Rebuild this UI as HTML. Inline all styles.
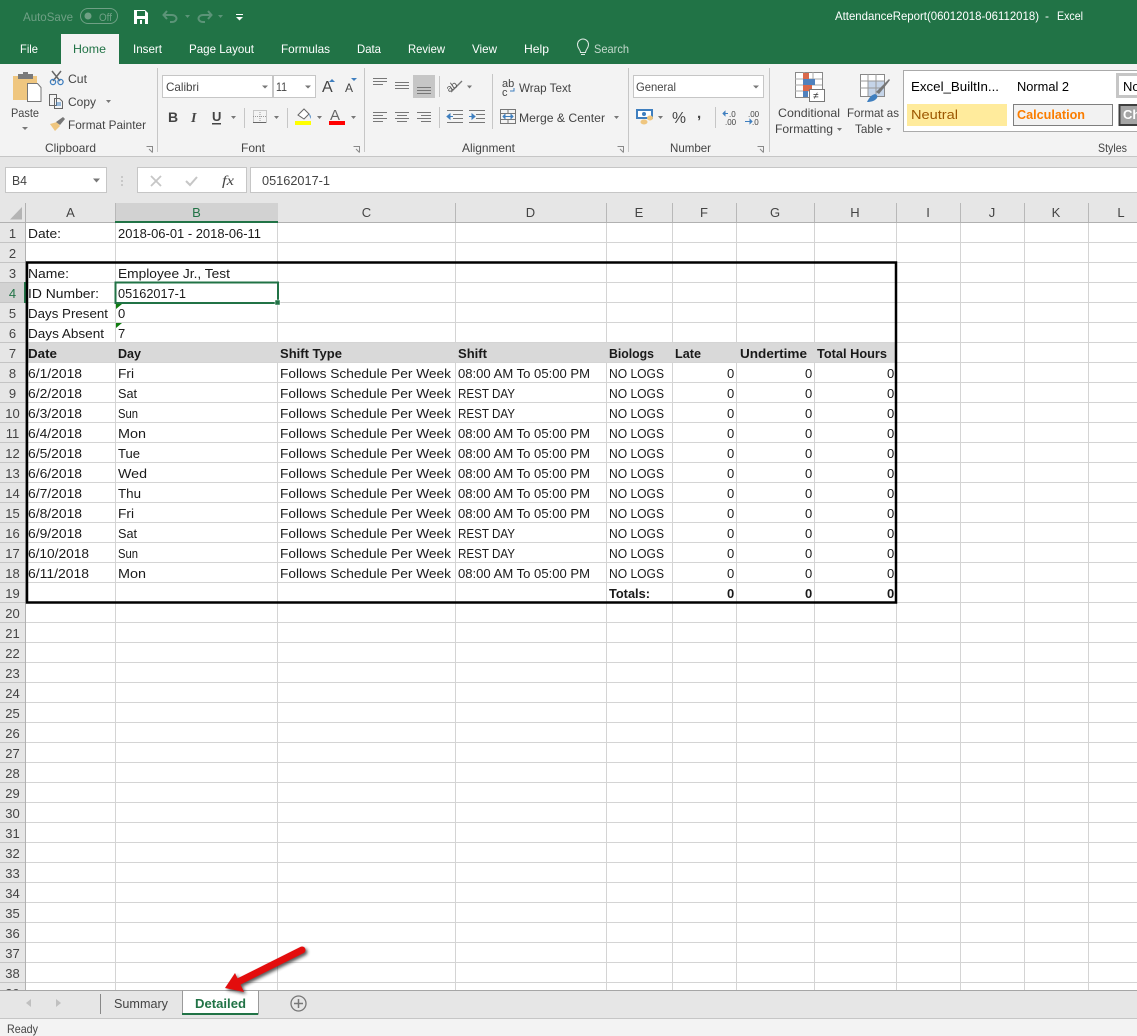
<!DOCTYPE html>
<html><head><meta charset="utf-8"><title>AttendanceReport - Excel</title>
<style>
html,body{margin:0;padding:0;background:#fff;width:1137px;height:1036px;overflow:hidden}
svg{display:block;font-family:"Liberation Sans",sans-serif}
.c text{font-size:13px;fill:#1a1a1a}
.b text{font-weight:bold}
.r text{font-size:12px;fill:#444}
.n text{font-size:13px;fill:#444;text-anchor:middle}
.t text{font-size:12px;fill:#fff}
.car{fill:#777}
.ln{stroke:#777;stroke-width:1;fill:none}
.sep{stroke:#c6c6c6;stroke-width:1}
</style></head><body>
<svg xmlns="http://www.w3.org/2000/svg" width="1137" height="1036" viewBox="0 0 1137 1036">
<defs>
<pattern id="rows" x="0" y="222" width="1137" height="20" patternUnits="userSpaceOnUse"><rect x="0" y="0" width="1137" height="1" fill="#d4d4d4"/></pattern>
<pattern id="hrows" x="0" y="222" width="26" height="20" patternUnits="userSpaceOnUse"><rect x="0" y="0" width="26" height="1" fill="#c4c4c4"/></pattern>
<filter id="sh" x="-20%" y="-20%" width="150%" height="150%"><feGaussianBlur stdDeviation="1.6"/></filter>
</defs>

<!-- title bar -->
<rect width="1137" height="64" fill="#217346"/>
<g class="t">
<text x="23" y="21" textLength="50" lengthAdjust="spacingAndGlyphs" style="fill:#6fa085">AutoSave</text>
<rect x="80.500" y="8.500" width="37" height="15" rx="7.500" fill="none" stroke="#6fa085"/>
<circle cx="88" cy="16" r="3.500" fill="#6fa085"/>
<text x="99" y="21" textLength="13" lengthAdjust="spacingAndGlyphs" style="fill:#6fa085;font-size:11px">Off</text>
<path d="M134 10h11l3 3v11h-14z" fill="#fff"/><rect x="137" y="11" width="8" height="5" fill="#217346"/><rect x="137" y="19" width="8" height="5" fill="#217346"/><rect x="140" y="20" width="2" height="4" fill="#fff"/>
<path d="M167 11l-3.500 4 3.500 4M164 15h8c3 0 4.500 2 4.500 3.500s-1.500 3.500-4.500 3.500h-2" fill="none" stroke="#5c9478" stroke-width="2"/>
<path d="M185 15h5l-2.500 3z" fill="#5c9478"/>
<path d="M208 11l3.500 4-3.500 4M211 15h-8c-3 0-4.500 2-4.500 3.500s1.500 3.500 4.500 3.500h2" fill="none" stroke="#5c9478" stroke-width="2"/>
<path d="M218 15h5l-2.500 3z" fill="#5c9478"/>
<rect x="236" y="14" width="7" height="1" fill="#fff"/><path d="M236 17h7l-3.500 3.500z" fill="#fff"/>
<text x="835" y="20" textLength="204" lengthAdjust="spacingAndGlyphs">AttendanceReport(06012018-06112018)</text>
<text x="1045" y="20">-</text>
<text x="1057" y="20" textLength="26" lengthAdjust="spacingAndGlyphs">Excel</text>
<text x="20" y="53" textLength="18" lengthAdjust="spacingAndGlyphs">File</text>
<rect x="61" y="34" width="58" height="30" fill="#f3f3f3"/>
<text x="73" y="53" textLength="33" lengthAdjust="spacingAndGlyphs" style="fill:#217346">Home</text>
<text x="133" y="53" textLength="29" lengthAdjust="spacingAndGlyphs">Insert</text>
<text x="189" y="53" textLength="65" lengthAdjust="spacingAndGlyphs">Page Layout</text>
<text x="281" y="53" textLength="49" lengthAdjust="spacingAndGlyphs">Formulas</text>
<text x="357" y="53" textLength="24" lengthAdjust="spacingAndGlyphs">Data</text>
<text x="408" y="53" textLength="37" lengthAdjust="spacingAndGlyphs">Review</text>
<text x="472" y="53" textLength="25" lengthAdjust="spacingAndGlyphs">View</text>
<text x="524" y="53" textLength="25" lengthAdjust="spacingAndGlyphs">Help</text>
<path d="M580.500 52.500c0-3-3-4-3-8a5.500 5.500 0 0 1 11 0c0 4-3 5-3 8zM581 54.500h4" fill="none" stroke="#dfeae4" stroke-width="1"/>
<text x="594" y="53" textLength="35" lengthAdjust="spacingAndGlyphs" style="fill:#c3d9cc">Search</text>
</g>

<!-- ribbon -->
<rect y="64" width="1137" height="92" fill="#f3f3f3"/>
<rect y="156" width="1137" height="1" fill="#c6c6c6"/>
<rect y="157" width="1137" height="46" fill="#e6e6e6"/>

<g class="sep">
<path d="M157.500 68v84M364.500 68v84M628.500 68v84M769.500 68v84"/>
<path d="M244.500 108v20M287.500 108v20M439.500 76v21M439.500 107v21M492.500 74v55M715.500 107v21"/>
</g>

<!-- clipboard -->
<path d="M13 76h24v24H13z" fill="#efc67f"/>
<rect x="18" y="74" width="15" height="5" fill="#7a7a7a"/><rect x="23" y="72" width="5" height="4" fill="#7a7a7a"/>
<path d="M27.500 83.500h10l3.500 4v14h-13.500z" fill="#fff" stroke="#777"/>
<path class="car" d="M22 127h6l-3 3z"/>
<path d="M52 71l8 10M61 71l-8 10" stroke="#666" stroke-width="1.500" fill="none"/>
<circle cx="53" cy="82" r="2.600" fill="none" stroke="#3f7fbf" stroke-width="1.300"/><circle cx="60.500" cy="82" r="2.600" fill="none" stroke="#3f7fbf" stroke-width="1.300"/>
<path d="M49.500 94.500h7v11h-7zM54.500 98.500h5l3 3v7h-8z" fill="#f3f3f3" stroke="#666"/>
<path d="M56 103h5M56 105h5" stroke="#3f7fbf"/>
<path d="M50 124l7-2 3 4-5 5z" fill="#efc67f"/><path d="M56 122l7-5 2 2-5 6z" fill="#777"/>
<g class="r">
<text x="11" y="117" textLength="28" lengthAdjust="spacingAndGlyphs">Paste</text>
<text x="68" y="83" textLength="19" lengthAdjust="spacingAndGlyphs">Cut</text>
<text x="68" y="106" textLength="28" lengthAdjust="spacingAndGlyphs">Copy</text>
<text x="68" y="129" textLength="78" lengthAdjust="spacingAndGlyphs">Format Painter</text>
<text x="45" y="152" textLength="51" lengthAdjust="spacingAndGlyphs">Clipboard</text>
<text x="241" y="152" textLength="24" lengthAdjust="spacingAndGlyphs">Font</text>
<text x="462" y="152" textLength="53" lengthAdjust="spacingAndGlyphs">Alignment</text>
<text x="670" y="152" textLength="41" lengthAdjust="spacingAndGlyphs">Number</text>
<text x="1098" y="152" textLength="29" lengthAdjust="spacingAndGlyphs">Styles</text>
</g>
<path class="car" d="M106 100h5l-2.500 3z"/>
<g fill="none" stroke="#888"><path d="M146.500 146.500h6v6M149 149l3.500 3.500"/><path d="M353.500 146.500h6v6M356 149l3.500 3.500"/><path d="M617.500 146.500h6v6M620 149l3.500 3.500"/><path d="M757.500 146.500h6v6M760 149l3.500 3.500"/></g>

<!-- font -->
<rect x="162.500" y="75.500" width="110" height="22" fill="#fff" stroke="#c6c6c6"/>
<rect x="273.500" y="75.500" width="42" height="22" fill="#fff" stroke="#c6c6c6"/>
<path class="car" d="M262 85.500h6l-3 3zM305 85.500h6l-3 3z"/>
<g class="r">
<text x="166" y="91" textLength="33" lengthAdjust="spacingAndGlyphs">Calibri</text>
<text x="276" y="91" textLength="11" lengthAdjust="spacingAndGlyphs">11</text>
<text x="322" y="92" style="font-size:16px">A</text><text x="345" y="92" style="font-size:12px">A</text>
<text x="168" y="122" style="font-weight:bold;font-size:14px">B</text>
<text x="191" y="122" style="font-style:italic;font-family:'Liberation Serif',serif;font-weight:bold;font-size:14px">I</text>
<text x="212" y="121" style="font-weight:bold;font-size:13px">U</text>
</g>
<rect x="212" y="123" width="9" height="1.500" fill="#444"/>
<path d="M329 82l3-3 3 3z" fill="#3f7fbf"/><path d="M351 78h6l-3 3z" fill="#3f7fbf"/>
<path class="car" d="M231 116h5l-2.500 3zM274 116h5l-2.500 3zM317 116h5l-2.500 3zM351 116h5l-2.500 3z"/>
<path d="M253.500 110.500h13v12h-13zM260 110v13M253 116.500h13" fill="none" stroke="#999" stroke-dasharray="1 1"/><path d="M253 122.500h13" stroke="#666"/>
<path d="M298 115l6-6 5 5-5 5z" fill="#fff" stroke="#666"/><path d="M309 114c2 1 2 3 1.500 5z" fill="#3f7fbf"/>
<rect x="295" y="121" width="16" height="4" fill="#ff0"/>
<text x="330" y="120" style="font-size:15px;font-weight:normal;fill:#666">A</text>
<rect x="329" y="121" width="16" height="4" fill="#f00"/>

<!-- alignment -->
<rect x="413" y="75" width="22" height="23" fill="#c6c6c6"/>
<g class="ln">
<path d="M373 78.500h14M373 81.500h14M373 84.500h10"/>
<path d="M395 82.500h14M395 85.500h14M395 88.500h14"/>
<path d="M417 87.500h14M417 90.500h14M417 93.500h14"/>
<path d="M373 112.500h14M373 115.500h10M373 118.500h14M373 121.500h10"/>
<path d="M395 112.500h14M397 115.500h10M395 118.500h14M397 121.500h10"/>
<path d="M417 112.500h14M421 115.500h10M417 118.500h14M421 121.500h10"/>
<path d="M447 110.500h16M453 114.500h10M453 118.500h10M447 122.500h16"/>
<path d="M469 110.500h16M476 114.500h9M476 118.500h9M469 122.500h16"/>
<path d="M451 92l11-11" stroke-width="1.300"/>
<path d="M500.500 109.500h15v14h-15zM500.500 113.500h15M500.500 119.500h15M508 109v4M508 120v4"/>
</g>
<path d="M447 116.500h6M447 116.500l3-2.500v5z" stroke="#3f7fbf" fill="#3f7fbf"/>
<path d="M475 116.500h-6M475 116.500l-3-2.500v5z" stroke="#3f7fbf" fill="#3f7fbf"/>
<path d="M503 116.500h10M503 116.500l2-2v4zM513 116.500l-2-2v4z" stroke="#3f7fbf" fill="#3f7fbf"/>
<text x="447" y="90" style="font-size:10px;fill:#555" transform="rotate(-35 452 88)">ab</text>
<path class="car" d="M467 85.500h5l-2.500 3zM614 116h5l-2.500 3z"/>
<g class="r">
<text x="502" y="87" style="font-size:11px">ab</text><text x="502" y="96" style="font-size:11px">c</text>
<text x="519" y="92" textLength="52" lengthAdjust="spacingAndGlyphs">Wrap Text</text>
<text x="519" y="122" textLength="86" lengthAdjust="spacingAndGlyphs">Merge &amp; Center</text>
</g>
<path d="M514 88v3h-4" fill="none" stroke="#3f7fbf"/>

<!-- number -->
<rect x="633.500" y="75.500" width="130" height="22" fill="#fff" stroke="#c6c6c6"/>
<path class="car" d="M753 85.500h6l-3 3z"/>
<rect x="637" y="110" width="15" height="8" fill="#fff" stroke="#3f7fbf" stroke-width="2"/>
<circle cx="644" cy="114" r="2" fill="#3f7fbf"/>
<ellipse cx="644" cy="122" rx="3.500" ry="2.500" fill="#efc67f"/><ellipse cx="650" cy="118" rx="3" ry="2.500" fill="#efc67f"/>
<path class="car" d="M658 116h5l-2.500 3z"/>
<g class="r">
<text x="636" y="91" textLength="40" lengthAdjust="spacingAndGlyphs">General</text>
<text x="672" y="123" style="font-size:16px" textLength="14" lengthAdjust="spacingAndGlyphs">%</text>
<text x="697" y="118" style="font-weight:bold;font-size:15px">,</text>
<text x="729" y="117" style="font-size:8px">.0</text><text x="725" y="125" style="font-size:8px">.00</text>
<text x="748" y="117" style="font-size:8px">.00</text><text x="752" y="125" style="font-size:8px">.0</text>
</g>
<path d="M723 113.500h5M723 113.500l2-2v4z" stroke="#3f7fbf" fill="#3f7fbf"/>
<path d="M745 121.500h7M752 121.500l-2-2v4z" stroke="#3f7fbf" fill="#3f7fbf"/>

<!-- conditional -->
<path d="M795.500 72.500h27v25h-27z" fill="#fff" stroke="#888"/>
<path d="M804 72v25M813 72v13M795 79h27M795 85h27M795 91h14" stroke="#aaa" fill="none"/>
<rect x="803" y="73" width="6" height="6" fill="#d9684a"/><rect x="803" y="79" width="12" height="6" fill="#4f81bd"/><rect x="803" y="85" width="9" height="6" fill="#d9684a"/><rect x="803" y="91" width="5" height="6" fill="#4f81bd"/>
<rect x="809.500" y="89.500" width="15" height="12" fill="#fff" stroke="#777"/>
<text x="813" y="99" style="font-size:10px;fill:#333">≠</text>
<path d="M860.500 74.500h24v22h-24z" fill="#fff" stroke="#888"/>
<rect x="868" y="81" width="16" height="15" fill="#c5d4e8"/>
<path d="M868 74v22M876 74v22M860 81h24M860 88h24" stroke="#999" fill="none"/>
<path d="M876 92l10-10 3-3 1 1-3 4-8 10z" fill="#777"/><path d="M867 102c2-4 4-7 8-8 2 1 3 2 2 4-2 3-6 4-10 4z" fill="#3f7fbf"/>
<g class="r">
<text x="778" y="117" textLength="62" lengthAdjust="spacingAndGlyphs">Conditional</text>
<text x="775" y="133" textLength="58" lengthAdjust="spacingAndGlyphs">Formatting</text>
<text x="847" y="117" textLength="52" lengthAdjust="spacingAndGlyphs">Format as</text>
<text x="855" y="133" textLength="28" lengthAdjust="spacingAndGlyphs">Table</text>
</g>
<path class="car" d="M837 128h5l-2.500 3zM886 128h5l-2.500 3z"/>

<!-- styles gallery -->
<rect x="903.500" y="70.500" width="240" height="61" fill="#fff" stroke="#aaa"/>
<text x="911" y="91" textLength="88" lengthAdjust="spacingAndGlyphs" fill="#000" font-size="13">Excel_BuiltIn...</text>
<text x="1017" y="91" textLength="52" lengthAdjust="spacingAndGlyphs" fill="#000" font-size="13">Normal 2</text>
<rect x="1117.500" y="74.500" width="30" height="22" fill="#fff" stroke="#c6c6c6" stroke-width="3"/>
<text x="1123" y="91" fill="#000" font-size="13">No</text>
<rect x="907" y="104" width="100" height="22" fill="#ffeb9c"/>
<text x="911" y="119" textLength="47" lengthAdjust="spacingAndGlyphs" fill="#9c5700" font-size="13">Neutral</text>
<rect x="1013.500" y="104.500" width="99" height="21" fill="#f2f2f2" stroke="#7f7f7f"/>
<text x="1017" y="119" textLength="68" lengthAdjust="spacingAndGlyphs" fill="#fa7d00" font-size="13" font-weight="bold">Calculation</text>
<rect x="1119.500" y="105" width="30" height="20" fill="#a5a5a5" stroke="#3f3f3f" stroke-width="2"/>
<text x="1123" y="119" fill="#fff" font-size="13" font-weight="bold">Ch</text>

<!-- formula bar -->
<rect x="5.500" y="167.500" width="101" height="25" fill="#fff" stroke="#c6c6c6"/>
<rect x="137.500" y="167.500" width="109" height="25" fill="#fff" stroke="#c6c6c6"/>
<rect x="250.500" y="167.500" width="890" height="25" fill="#fff" stroke="#c6c6c6"/>
<path class="car" d="M93 178.500h7l-3.500 4z"/>
<path d="M122 176v2M122 180v2M122 184v2" stroke="#aaa"/>
<path d="M151 176l10 10M161 176l-10 10" stroke="#c6c6c6" stroke-width="1.800"/>
<path d="M186 181l4 4 7-8" stroke="#c6c6c6" stroke-width="2" fill="none"/>
<g class="r">
<text x="12" y="185" textLength="15" lengthAdjust="spacingAndGlyphs" style="font-size:13px">B4</text>
<text x="222" y="185" style="font-family:'Liberation Serif',serif;font-style:italic;font-size:14px" textLength="12" lengthAdjust="spacingAndGlyphs">fx</text>
<text x="262" y="185" textLength="68" lengthAdjust="spacingAndGlyphs" style="font-size:13px">05162017-1</text>
</g>

<!-- sheet -->
<rect x="0" y="203" width="1137" height="787" fill="#fff"/>
<rect x="0" y="203" width="1137" height="19" fill="#e6e6e6"/>
<rect x="0" y="203" width="25" height="787" fill="#e6e6e6"/>
<rect x="0" y="222" width="25" height="768" fill="url(#hrows)"/>
<rect x="26" y="222" width="1111" height="768" fill="url(#rows)"/>
<path d="M115.500 222V990M277.500 222V990M455.500 222V990M606.500 222V990M672.500 222V990M736.500 222V990M814.500 222V990M896.500 222V990M960.500 222V990M1024.500 222V990M1088.500 222V990" stroke="#d4d4d4"/>
<path d="M115.500 203v19M277.500 203v19M455.500 203v19M606.500 203v19M672.500 203v19M736.500 203v19M814.500 203v19M896.500 203v19M960.500 203v19M1024.500 203v19M1088.500 203v19" stroke="#b8b8b8"/>
<path d="M25.500 203V990M0 222.500H1137" stroke="#b1b1b1"/>
<path d="M10 219.500L22 207v12.500z" fill="#b4b4b4"/>
<rect x="116" y="203" width="162" height="19" fill="#d2d2d2"/>
<rect x="115" y="221" width="163" height="2" fill="#217346"/>
<rect x="0" y="283" width="25" height="19" fill="#d2d2d2"/>
<rect x="24" y="282" width="2" height="21" fill="#217346"/>
<rect x="27" y="343" width="868" height="19" fill="#d9d9d9"/>

<g class="n">
<text x="70.500" y="217">A</text><text x="196.500" y="217" style="fill:#217346">B</text><text x="366.500" y="217">C</text><text x="530.500" y="217">D</text><text x="639" y="217">E</text><text x="704" y="217">F</text><text x="775" y="217">G</text><text x="855" y="217">H</text><text x="928" y="217">I</text><text x="992" y="217">J</text><text x="1056" y="217">K</text><text x="1121" y="217">L</text>
<text x="12.500" y="238">1</text><text x="12.500" y="258">2</text><text x="12.500" y="278">3</text><text x="12.500" y="298" style="fill:#217346">4</text><text x="12.500" y="318">5</text><text x="12.500" y="338">6</text><text x="12.500" y="358">7</text><text x="12.500" y="378">8</text><text x="12.500" y="398">9</text><text x="12.500" y="418">10</text><text x="12.500" y="438">11</text><text x="12.500" y="458">12</text><text x="12.500" y="478">13</text><text x="12.500" y="498">14</text><text x="12.500" y="518">15</text><text x="12.500" y="538">16</text><text x="12.500" y="558">17</text><text x="12.500" y="578">18</text><text x="12.500" y="598">19</text><text x="12.500" y="618">20</text><text x="12.500" y="638">21</text><text x="12.500" y="658">22</text><text x="12.500" y="678">23</text><text x="12.500" y="698">24</text><text x="12.500" y="718">25</text><text x="12.500" y="738">26</text><text x="12.500" y="758">27</text><text x="12.500" y="778">28</text><text x="12.500" y="798">29</text><text x="12.500" y="818">30</text><text x="12.500" y="838">31</text><text x="12.500" y="858">32</text><text x="12.500" y="878">33</text><text x="12.500" y="898">34</text><text x="12.500" y="918">35</text><text x="12.500" y="938">36</text><text x="12.500" y="958">37</text><text x="12.500" y="978">38</text><text x="12.500" y="998">39</text>
</g>

<g class="c">
<text x="28" y="238" textLength="33" lengthAdjust="spacingAndGlyphs">Date:</text>
<text x="118" y="238" textLength="143" lengthAdjust="spacingAndGlyphs">2018-06-01 - 2018-06-11</text>
<text x="28" y="278" textLength="41" lengthAdjust="spacingAndGlyphs">Name:</text>
<text x="118" y="278" textLength="112" lengthAdjust="spacingAndGlyphs">Employee Jr., Test</text>
<text x="28" y="298" textLength="71" lengthAdjust="spacingAndGlyphs">ID Number:</text>
<text x="118" y="298" textLength="68" lengthAdjust="spacingAndGlyphs">05162017-1</text>
<text x="28" y="318" textLength="80" lengthAdjust="spacingAndGlyphs">Days Present</text>
<text x="118" y="318">0</text>
<text x="28" y="338" textLength="76" lengthAdjust="spacingAndGlyphs">Days Absent</text>
<text x="118" y="338">7</text>

<text x="28" y="378" textLength="54" lengthAdjust="spacingAndGlyphs">6/1/2018</text>
<text x="28" y="398" textLength="54" lengthAdjust="spacingAndGlyphs">6/2/2018</text>
<text x="28" y="418" textLength="54" lengthAdjust="spacingAndGlyphs">6/3/2018</text>
<text x="28" y="438" textLength="54" lengthAdjust="spacingAndGlyphs">6/4/2018</text>
<text x="28" y="458" textLength="54" lengthAdjust="spacingAndGlyphs">6/5/2018</text>
<text x="28" y="478" textLength="54" lengthAdjust="spacingAndGlyphs">6/6/2018</text>
<text x="28" y="498" textLength="54" lengthAdjust="spacingAndGlyphs">6/7/2018</text>
<text x="28" y="518" textLength="54" lengthAdjust="spacingAndGlyphs">6/8/2018</text>
<text x="28" y="538" textLength="54" lengthAdjust="spacingAndGlyphs">6/9/2018</text>
<text x="28" y="558" textLength="61" lengthAdjust="spacingAndGlyphs">6/10/2018</text>
<text x="28" y="578" textLength="61" lengthAdjust="spacingAndGlyphs">6/11/2018</text>

<text x="118" y="378" textLength="16" lengthAdjust="spacingAndGlyphs">Fri</text>
<text x="118" y="398" textLength="19" lengthAdjust="spacingAndGlyphs">Sat</text>
<text x="118" y="418" textLength="20" lengthAdjust="spacingAndGlyphs">Sun</text>
<text x="118" y="438" textLength="28" lengthAdjust="spacingAndGlyphs">Mon</text>
<text x="118" y="458" textLength="22" lengthAdjust="spacingAndGlyphs">Tue</text>
<text x="118" y="478" textLength="29" lengthAdjust="spacingAndGlyphs">Wed</text>
<text x="118" y="498" textLength="23" lengthAdjust="spacingAndGlyphs">Thu</text>
<text x="118" y="518" textLength="16" lengthAdjust="spacingAndGlyphs">Fri</text>
<text x="118" y="538" textLength="19" lengthAdjust="spacingAndGlyphs">Sat</text>
<text x="118" y="558" textLength="20" lengthAdjust="spacingAndGlyphs">Sun</text>
<text x="118" y="578" textLength="28" lengthAdjust="spacingAndGlyphs">Mon</text>

<text x="280" y="378" textLength="171" lengthAdjust="spacingAndGlyphs">Follows Schedule Per Week</text>
<text x="280" y="398" textLength="171" lengthAdjust="spacingAndGlyphs">Follows Schedule Per Week</text>
<text x="280" y="418" textLength="171" lengthAdjust="spacingAndGlyphs">Follows Schedule Per Week</text>
<text x="280" y="438" textLength="171" lengthAdjust="spacingAndGlyphs">Follows Schedule Per Week</text>
<text x="280" y="458" textLength="171" lengthAdjust="spacingAndGlyphs">Follows Schedule Per Week</text>
<text x="280" y="478" textLength="171" lengthAdjust="spacingAndGlyphs">Follows Schedule Per Week</text>
<text x="280" y="498" textLength="171" lengthAdjust="spacingAndGlyphs">Follows Schedule Per Week</text>
<text x="280" y="518" textLength="171" lengthAdjust="spacingAndGlyphs">Follows Schedule Per Week</text>
<text x="280" y="538" textLength="171" lengthAdjust="spacingAndGlyphs">Follows Schedule Per Week</text>
<text x="280" y="558" textLength="171" lengthAdjust="spacingAndGlyphs">Follows Schedule Per Week</text>
<text x="280" y="578" textLength="171" lengthAdjust="spacingAndGlyphs">Follows Schedule Per Week</text>

<text x="458" y="378" textLength="132" lengthAdjust="spacingAndGlyphs">08:00 AM To 05:00 PM</text>
<text x="458" y="398" textLength="57" lengthAdjust="spacingAndGlyphs">REST DAY</text>
<text x="458" y="418" textLength="57" lengthAdjust="spacingAndGlyphs">REST DAY</text>
<text x="458" y="438" textLength="132" lengthAdjust="spacingAndGlyphs">08:00 AM To 05:00 PM</text>
<text x="458" y="458" textLength="132" lengthAdjust="spacingAndGlyphs">08:00 AM To 05:00 PM</text>
<text x="458" y="478" textLength="132" lengthAdjust="spacingAndGlyphs">08:00 AM To 05:00 PM</text>
<text x="458" y="498" textLength="132" lengthAdjust="spacingAndGlyphs">08:00 AM To 05:00 PM</text>
<text x="458" y="518" textLength="132" lengthAdjust="spacingAndGlyphs">08:00 AM To 05:00 PM</text>
<text x="458" y="538" textLength="57" lengthAdjust="spacingAndGlyphs">REST DAY</text>
<text x="458" y="558" textLength="57" lengthAdjust="spacingAndGlyphs">REST DAY</text>
<text x="458" y="578" textLength="132" lengthAdjust="spacingAndGlyphs">08:00 AM To 05:00 PM</text>

<text x="609" y="378" textLength="55" lengthAdjust="spacingAndGlyphs">NO LOGS</text>
<text x="609" y="398" textLength="55" lengthAdjust="spacingAndGlyphs">NO LOGS</text>
<text x="609" y="418" textLength="55" lengthAdjust="spacingAndGlyphs">NO LOGS</text>
<text x="609" y="438" textLength="55" lengthAdjust="spacingAndGlyphs">NO LOGS</text>
<text x="609" y="458" textLength="55" lengthAdjust="spacingAndGlyphs">NO LOGS</text>
<text x="609" y="478" textLength="55" lengthAdjust="spacingAndGlyphs">NO LOGS</text>
<text x="609" y="498" textLength="55" lengthAdjust="spacingAndGlyphs">NO LOGS</text>
<text x="609" y="518" textLength="55" lengthAdjust="spacingAndGlyphs">NO LOGS</text>
<text x="609" y="538" textLength="55" lengthAdjust="spacingAndGlyphs">NO LOGS</text>
<text x="609" y="558" textLength="55" lengthAdjust="spacingAndGlyphs">NO LOGS</text>
<text x="609" y="578" textLength="55" lengthAdjust="spacingAndGlyphs">NO LOGS</text>

<text x="727" y="378">0</text><text x="805" y="378">0</text><text x="887" y="378">0</text>
<text x="727" y="398">0</text><text x="805" y="398">0</text><text x="887" y="398">0</text>
<text x="727" y="418">0</text><text x="805" y="418">0</text><text x="887" y="418">0</text>
<text x="727" y="438">0</text><text x="805" y="438">0</text><text x="887" y="438">0</text>
<text x="727" y="458">0</text><text x="805" y="458">0</text><text x="887" y="458">0</text>
<text x="727" y="478">0</text><text x="805" y="478">0</text><text x="887" y="478">0</text>
<text x="727" y="498">0</text><text x="805" y="498">0</text><text x="887" y="498">0</text>
<text x="727" y="518">0</text><text x="805" y="518">0</text><text x="887" y="518">0</text>
<text x="727" y="538">0</text><text x="805" y="538">0</text><text x="887" y="538">0</text>
<text x="727" y="558">0</text><text x="805" y="558">0</text><text x="887" y="558">0</text>
<text x="727" y="578">0</text><text x="805" y="578">0</text><text x="887" y="578">0</text>
</g>
<g class="c b">
<text x="28" y="358" textLength="29" lengthAdjust="spacingAndGlyphs">Date</text>
<text x="118" y="358" textLength="23" lengthAdjust="spacingAndGlyphs">Day</text>
<text x="280" y="358" textLength="62" lengthAdjust="spacingAndGlyphs">Shift Type</text>
<text x="458" y="358" textLength="29" lengthAdjust="spacingAndGlyphs">Shift</text>
<text x="609" y="358" textLength="45" lengthAdjust="spacingAndGlyphs">Biologs</text>
<text x="675" y="358" textLength="26" lengthAdjust="spacingAndGlyphs">Late</text>
<text x="740" y="358" textLength="67" lengthAdjust="spacingAndGlyphs">Undertime</text>
<text x="817" y="358" textLength="70" lengthAdjust="spacingAndGlyphs">Total Hours</text>
<text x="609" y="598" textLength="41" lengthAdjust="spacingAndGlyphs">Totals:</text>
<text x="727" y="598">0</text><text x="805" y="598">0</text><text x="887" y="598">0</text>
</g>

<!-- outline + selection -->
<rect x="27" y="262.500" width="869" height="340" fill="none" stroke="#000" stroke-width="2.500"/>
<path d="M116 304h6l-6 5zM116 323h6l-6 5z" fill="#107c10"/>
<rect x="115.500" y="282.500" width="162.500" height="20.500" fill="none" stroke="#217346" stroke-width="2"/>
<rect x="275" y="300" width="5" height="5" fill="#217346" stroke="#fff" stroke-width="0.500"/>

<!-- sheet tabs -->
<rect x="0" y="990" width="1137" height="28" fill="#e6e6e6"/>
<rect x="0" y="990" width="1137" height="1" fill="#a6a6a6"/>
<rect x="0" y="1018" width="1137" height="1" fill="#c6c6c6"/>
<rect x="0" y="1019" width="1137" height="17" fill="#f3f3f3"/>
<path d="M31 999v8l-5-4zM56 999v8l5-4z" fill="#c0c0c0"/>
<path d="M100.500 994v20" stroke="#888"/>
<path d="M182.500 990.500v24M258.500 990.500v24" stroke="#9a9a9a"/>
<rect x="183" y="991" width="75" height="23" fill="#fff"/>
<rect x="182" y="1013" width="76" height="2" fill="#217346"/>
<circle cx="298.500" cy="1003.500" r="7.500" fill="none" stroke="#777" stroke-width="1.300"/>
<path d="M294 1003.500h9M298.500 999v9" stroke="#777" stroke-width="1.500"/>
<text x="114" y="1008" textLength="54" lengthAdjust="spacingAndGlyphs" font-size="13" fill="#444">Summary</text>
<text x="195" y="1008" textLength="51" lengthAdjust="spacingAndGlyphs" font-size="13" font-weight="bold" fill="#217346">Detailed</text>
<text x="7" y="1033" textLength="31" lengthAdjust="spacingAndGlyphs" font-size="12" fill="#444">Ready</text>

<!-- arrow -->
<g transform="translate(2 2)" filter="url(#sh)" opacity="0.75">
<path d="M302 950L240 981" stroke="#222" stroke-width="7" stroke-linecap="round"/>
<path d="M225 988l10-15 9 19z" fill="#222"/>
</g>
<path d="M302 950L238 982" stroke="#e30d0d" stroke-width="7" stroke-linecap="round"/>
<path d="M225 988l10-15 9 19z" fill="#e30d0d"/>
</svg>
</body></html>
